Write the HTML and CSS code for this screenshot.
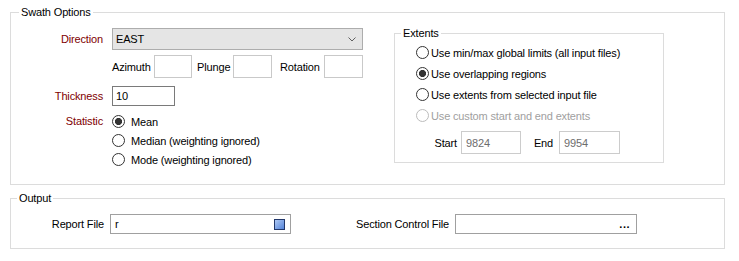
FILE: index.html
```html
<!DOCTYPE html>
<html>
<head>
<meta charset="utf-8">
<link rel="stylesheet" href="styles.css">
</head>
<body>
<div class="page">
  <fieldset class="group swath">
    <legend class="legend swath-legend">Swath Options</legend>
    <div class="swath-body">
      <div class="main">
        <div class="row row-direction">
          <span class="lbl req">Direction</span>
          <div class="select">
            <span class="select-value">EAST</span>
            <svg class="chev" width="8" height="5" viewBox="0 0 8 5"><path d="M0.5 0.5 L4 4 L7.5 0.5" fill="none" stroke="#606060" stroke-width="1"/></svg>
          </div>
        </div>
        <div class="row row-angles">
          <span class="lbl"></span>
          <div class="angles">
            <span class="alabel">Azimuth</span><span class="box abox"></span>
            <span class="alabel plunge">Plunge</span><span class="box abox"></span>
            <span class="alabel rotation">Rotation</span><span class="box abox"></span>
          </div>
        </div>
        <div class="row row-thick">
          <span class="lbl req">Thickness</span>
          <div class="box thick">10</div>
        </div>
        <div class="row row-stat">
          <span class="lbl req stat-lbl">Statistic</span>
          <div class="radios">
            <div class="radio-row"><span class="radio checked"></span><span class="rtext">Mean</span></div>
            <div class="radio-row"><span class="radio"></span><span class="rtext">Median (weighting ignored)</span></div>
            <div class="radio-row"><span class="radio"></span><span class="rtext">Mode (weighting ignored)</span></div>
          </div>
        </div>
      </div>
      <fieldset class="group extents">
        <legend class="legend ext-legend">Extents</legend>
        <div class="ext-radios">
          <div class="eradio-row"><span class="radio"></span><span class="etext">Use min/max global limits (all input files)</span></div>
          <div class="eradio-row"><span class="radio checked"></span><span class="etext">Use overlapping regions</span></div>
          <div class="eradio-row"><span class="radio"></span><span class="etext">Use extents from selected input file</span></div>
          <div class="eradio-row disabled"><span class="radio"></span><span class="etext">Use custom start and end extents</span></div>
        </div>
        <div class="range-row">
          <span class="rlabel start-lbl">Start</span><span class="box rbox">9824</span>
          <span class="rlabel end-lbl">End</span><span class="box rbox end-box">9954</span>
        </div>
      </fieldset>
    </div>
  </fieldset>

  <fieldset class="group output">
    <legend class="legend out-legend">Output</legend>
    <div class="out-row">
      <span class="olabel report-lbl">Report File</span>
      <div class="box fbox report-box">
        <span class="ftext">r</span>
        <svg class="file-icon" width="11" height="11" viewBox="0 0 11 11">
          <defs>
            <linearGradient id="bg" x1="0" y1="0" x2="1" y2="1">
              <stop offset="0" stop-color="#b4cdf6"/>
              <stop offset="1" stop-color="#4f80d8"/>
            </linearGradient>
          </defs>
          <rect x="0.5" y="0.5" width="10" height="10" fill="url(#bg)" stroke="#23386a" stroke-width="1"/>
        </svg>
      </div>
      <span class="olabel section-lbl">Section Control File</span>
      <div class="box fbox section-box">
        <span class="ftext"></span>
        <span class="dots">...</span>
      </div>
    </div>
  </fieldset>
</div>
</body>
</html>
```

FILE: styles.css
```css
html, body {
  margin: 0;
  padding: 0;
  background: #ffffff;
}

body {
  font-family: "Liberation Sans", Arial, sans-serif;
  font-size: 11px;
  letter-spacing: -0.15px;
  color: #000000;
}

.page {
  padding: 5px 0 0 10px;
}

.group {
  margin: 0;
  border: 1px solid #dcdcdc;
  box-sizing: border-box;
  min-width: 0;
}

.legend {
  padding: 0 2px;
  line-height: 14px;
  height: 14px;
}

/* Swath Options */
.swath {
  width: 715px;
  padding: 0 0 15px 0;
}

.swath-legend {
  margin-left: 8px;
}

.swath-body {
  display: flex;
  align-items: flex-start;
}

.main {
  width: 352px;
  display: flex;
  flex-direction: column;
}

.row {
  display: grid;
  grid-template-columns: 92px 251px;
  column-gap: 9px;
  align-items: center;
}

.lbl {
  text-align: right;
  white-space: nowrap;
}

.req {
  color: #800000;
}

.row-direction {
  margin-top: 9px;
  height: 22px;
}

.select {
  height: 22px;
  box-sizing: border-box;
  border: 1px solid #adadad;
  background: #e5e5e5;
  display: flex;
  align-items: center;
  justify-content: space-between;
  padding: 0 6px 0 3px;
}

.chev {
  display: block;
}

.row-angles {
  margin-top: 5px;
  height: 23px;
}

.angles {
  display: grid;
  grid-template-columns: 42px 38px 41px 39px 52px 39px;
  align-items: center;
  height: 23px;
}

.alabel {
  white-space: nowrap;
}

.plunge {
  padding-left: 5px;
}

.rotation {
  padding-left: 8px;
}

.box {
  box-sizing: border-box;
  border: 1px solid #c9c9c9;
  background: #ffffff;
  display: flex;
  align-items: center;
}

.abox {
  height: 23px;
}

.row-thick {
  margin-top: 8px;
  height: 20px;
}

.thick {
  width: 63px;
  height: 20px;
  border-color: #7a7a7a;
  padding-left: 3px;
}

.row-stat {
  margin-top: 6px;
  align-items: start;
}

.stat-lbl {
  line-height: 19px;
}

.radios {
  display: flex;
  flex-direction: column;
}

.radio-row {
  height: 19px;
  display: flex;
  align-items: center;
}

.radio {
  width: 13px;
  height: 13px;
  box-sizing: border-box;
  border: 1px solid #333333;
  border-radius: 50%;
  background: #ffffff;
  flex: none;
}

.radio.checked {
  background: radial-gradient(circle, #333333 0, #333333 3.2px, #ffffff 3.9px);
}

.rtext {
  margin-left: 6px;
  white-space: nowrap;
}

/* Extents */
.extents {
  width: 270px;
  margin-left: 31px;
  margin-top: 7px;
  padding: 2px 0 8px 21px;
}

.ext-legend {
  margin-left: -15px;
}

.ext-radios {
  display: flex;
  flex-direction: column;
}

.eradio-row {
  height: 21px;
  display: flex;
  align-items: center;
}

.etext {
  margin-left: 2px;
  white-space: nowrap;
}

.disabled .radio {
  border-color: #bcbcbc;
}

.disabled .etext {
  color: #a0a0a0;
}

.range-row {
  margin-top: 5px;
  display: grid;
  grid-template-columns: 45px 60px 38px 61px;
  align-items: center;
  height: 23px;
}

.rlabel {
  text-align: right;
  white-space: nowrap;
}

.start-lbl {
  padding-right: 4px;
}

.end-lbl {
  padding-right: 6px;
}

.rbox {
  height: 23px;
  border-color: #cccccc;
  color: #6d6d6d;
  padding-left: 4px;
}

/* Output */
.output {
  width: 715px;
  margin-top: 6px;
  padding: 9px 0 14px 0;
}

.out-legend {
  margin-left: 6px;
}

.out-row {
  display: flex;
  align-items: center;
  height: 20px;
}

.olabel {
  text-align: right;
  white-space: nowrap;
  margin-right: 6px;
}

.report-lbl {
  width: 93px;
}

.section-lbl {
  width: 158px;
}

.fbox {
  height: 20px;
  border-color: #a0a0a0;
  justify-content: space-between;
  padding-left: 4px;
}

.report-box {
  width: 181px;
  padding-right: 5px;
}

.section-box {
  width: 182px;
  padding-right: 6px;
}

.file-icon {
  display: block;
}

.dots {
  font-weight: bold;
  letter-spacing: 0.5px;
  line-height: 14px;
}
```
